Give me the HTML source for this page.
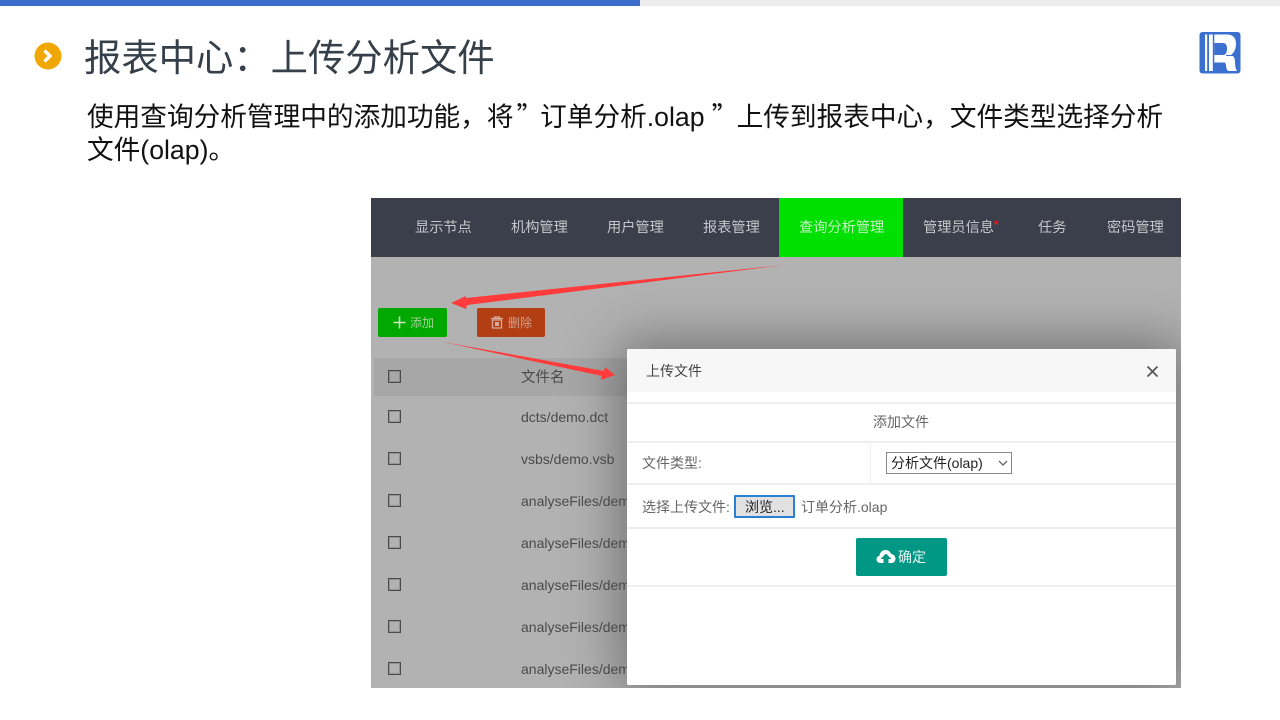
<!DOCTYPE html>
<html lang="zh"><head><meta charset="utf-8"><title>报表中心</title>
<style>
html,body{margin:0;padding:0;background:#fff}
body{width:1280px;height:720px;position:relative;overflow:hidden;font-family:"Liberation Sans","Noto Sans CJK SC",sans-serif}
.a{position:absolute;white-space:nowrap}
.nav{top:218px;font-size:14.2px;line-height:20px;color:#c6c7cb}
.cb{position:absolute;left:388px;width:11px;height:11px;border:1px solid #4a4a4a;box-shadow:inset 0 0 0 1px rgba(90,90,90,.35);background:transparent}
.f{position:absolute;left:521px;font-size:14px;line-height:18px;color:#4a4a4a;white-space:nowrap}
.ln{position:absolute;left:627px;width:549px;height:2px;background:#eee}
.t{font-size:14px;line-height:20px;color:#666}
.q{display:inline-block;font-family:"Noto Sans CJK SC",sans-serif}
</style></head><body>
<div class="a" style="left:0;top:0;width:1280px;height:6px;background:#ececec"></div>
<div class="a" style="left:0;top:0;width:640px;height:6px;background:#3d6dca"></div>

<svg class="a" style="left:34px;top:42px" width="28" height="28" viewBox="0 0 28 28"><circle cx="14" cy="14" r="13.5" fill="#f0a800"/><path d="M10.500 8.500L16 14l-5.500 5.500" fill="none" stroke="#fff" stroke-width="3.400"/></svg>
<div class="a" style="left:84px;top:34px;font-size:37.330px;line-height:48px;color:#36404a">报表中心&#xFF1A;上传分析文件</div>
<div class="a" style="left:87px;top:98px;font-size:26.670px;line-height:33px;color:#111">使用查询分析管理中的添加功能&#xFF0C;将<span class="q" style="width:26.670px;text-indent:3px">&#x201D;</span>订单分析.olap<span class="q" style="width:32px;text-indent:7px">&#x201D;</span>上传到报表中心&#xFF0C;文件类型选择分析<br>文件(olap)。</div>

<svg class="a" style="left:1199px;top:32px" width="42" height="42" viewBox="0 0 42 42"><rect x="0.500" y="0" width="41" height="41.500" rx="3" fill="#3b6fd0"/><rect x="6" y="2.500" width="2.200" height="36.500" fill="#fff"/><rect x="10" y="2.500" width="3.800" height="36.500" fill="#fff"/><path d="M15.300 2.500H28Q37 2.500 37 12Q37 19 32 23Q36 24 36 30Q36 36 38 39H29Q27 37 27 33Q27 30.500 23 30.500H15.300Z" fill="#fff"/><path d="M15.300 11H24Q28 11 28 16.500Q28 23 24 23H15.300Z" fill="#3b6fd0"/><path d="M15.300 30.500H26V39H15.300Z" fill="#3b6fd0"/><path d="M27 23.500H34" stroke="#3b6fd0" stroke-width="1"/></svg>

<div class="a" style="left:371px;top:198px;width:810px;height:490px;background:#b2b2b2;overflow:hidden">
  <div style="position:absolute;left:256px;top:151px;width:549px;height:336px;box-shadow:0 0 50px 8px rgba(0,0,0,.36)"></div>
  <div style="position:absolute;left:3px;top:160px;width:253px;height:38px;background:rgba(0,0,0,.06)"></div>
  <div style="position:absolute;left:0;top:0;width:810px;height:59px;background:#3b3e4b"></div>
  <div style="position:absolute;left:408px;top:0;width:124px;height:59px;background:#00e000"></div>
</div>

<div class="a nav" style="left:415px">显示节点</div>
<div class="a nav" style="left:511px">机构管理</div>
<div class="a nav" style="left:607px">用户管理</div>
<div class="a nav" style="left:703px">报表管理</div>
<div class="a nav" style="left:799px;color:#c4f2c4">查询分析管理</div>
<div class="a nav" style="left:923px">管理员信息<span style="color:#f0141c;font-size:12px;font-weight:bold;position:relative;top:-3px">*</span></div>
<div class="a nav" style="left:1038px">任务</div>
<div class="a nav" style="left:1107px">密码管理</div>

<div class="a" style="left:378px;top:308px;width:69px;height:29px;background:#00a800;border-radius:2px"></div>
<svg class="a" style="left:393px;top:316px" width="13" height="13" viewBox="0 0 13 13"><path d="M6.500 0.500v12M0.500 6.500h12" stroke="#c8e6c0" stroke-width="1.600"/></svg>
<div class="a" style="left:410px;top:315px;font-size:12px;line-height:16px;color:#a5d39a">添加</div>
<div class="a" style="left:477px;top:308px;width:68px;height:29px;background:#b23f14;border-radius:2px"></div>
<svg class="a" style="left:490px;top:316px" width="14" height="13" viewBox="0 0 14 13"><path d="M1 2.500h12M4.500 2V1h5v1M2.500 4h9v8h-9z" fill="none" stroke="#d8a898" stroke-width="1.300"/><path d="M5 6h4v4H5z" fill="#d8a898"/></svg>
<div class="a" style="left:508px;top:315px;font-size:12px;line-height:16px;color:#d0a090">删除</div>

<div class="cb" style="top:370px"></div>
<div class="cb" style="top:410px"></div>
<div class="cb" style="top:452px"></div>
<div class="cb" style="top:494px"></div>
<div class="cb" style="top:536px"></div>
<div class="cb" style="top:578px"></div>
<div class="cb" style="top:620px"></div>
<div class="cb" style="top:662px"></div>

<div class="f" style="top:369px;font-size:14.500px">文件名</div>
<div class="f" style="top:408px">dcts/demo.dct</div>
<div class="f" style="top:450px">vsbs/demo.vsb</div>
<div class="f" style="top:492px">analyseFiles/dem</div>
<div class="f" style="top:534px">analyseFiles/dem</div>
<div class="f" style="top:576px">analyseFiles/dem</div>
<div class="f" style="top:618px">analyseFiles/dem</div>
<div class="f" style="top:660px">analyseFiles/dem</div>

<svg class="a" style="left:371px;top:198px" width="430" height="200" viewBox="371 198 430 200">
<path d="M784 265L466 298 466 296 451 303 466 309 467 305Z" fill="#ff3b3b"/>
<path d="M443 342L604 371 605 367 615 375 601 380 602 376Z" fill="#ff3b3b"/>
</svg>

<div class="a" style="left:627px;top:349px;width:549px;height:336px;background:#fff;border-radius:2px"></div>
<div class="a" style="left:627px;top:349px;width:549px;height:43px;background:#f7f7f7;border-radius:2px 2px 0 0"></div>
<div class="a" style="left:646px;top:361px;font-size:14px;line-height:20px;color:#444">上传文件</div>
<svg class="a" style="left:1146px;top:365px" width="13" height="13" viewBox="0 0 13 13"><path d="M1.500 1.500l10 10M11.500 1.500l-10 10" stroke="#555" stroke-width="1.700"/></svg>
<div class="ln" style="top:402px"></div>
<div class="ln" style="top:441px"></div>
<div class="ln" style="top:483px"></div>
<div class="ln" style="top:527px"></div>
<div class="ln" style="top:585px"></div>
<div class="a" style="left:870px;top:442px;width:1px;height:41px;background:#eee"></div>

<div class="a t" style="left:873px;top:412px">添加文件</div>
<div class="a t" style="left:642px;top:453px">文件类型:</div>
<div class="a" style="left:886px;top:452px;width:124px;height:20px;border:1px solid #8a8a8a;background:#fff"></div>
<div class="a" style="left:891px;top:453px;font-size:14px;line-height:20px;color:#222">分析文件(olap)</div>
<svg class="a" style="left:998px;top:460px" width="10" height="6" viewBox="0 0 10 6"><path d="M1 1l4 4 4-4" fill="none" stroke="#555" stroke-width="1.200"/></svg>
<div class="a t" style="left:642px;top:497px">选择上传文件:</div>
<div class="a" style="left:734px;top:495px;width:57px;height:19px;background:#e1e1e1;border:2px solid #2a7fd6;border-radius:1px"></div>
<div class="a" style="left:745px;top:497px;font-size:14px;line-height:20px;color:#222">浏览...</div>
<div class="a t" style="left:801px;top:497px">订单分析.olap</div>

<div class="a" style="left:856px;top:538px;width:91px;height:38px;background:#009785;border-radius:2px"></div>
<svg class="a" style="left:876px;top:549px" width="20" height="16" viewBox="0 0 20 16"><path d="M4.500 14C2 14 .5 12.300.5 10.300c0-1.800 1.200-3.200 3-3.600C3.800 3.400 6.300 1 9.500 1c2.700 0 4.800 1.600 5.600 4 2.500.2 4.400 2.200 4.400 4.700 0 2.400-1.900 4.300-4.300 4.300h-2.700v-4h3L10 4.500 4.500 10h3v4z" fill="#fff"/></svg>
<div class="a" style="left:898px;top:547px;font-size:14px;line-height:20px;color:#e6f5f3">确定</div>
</body></html>
